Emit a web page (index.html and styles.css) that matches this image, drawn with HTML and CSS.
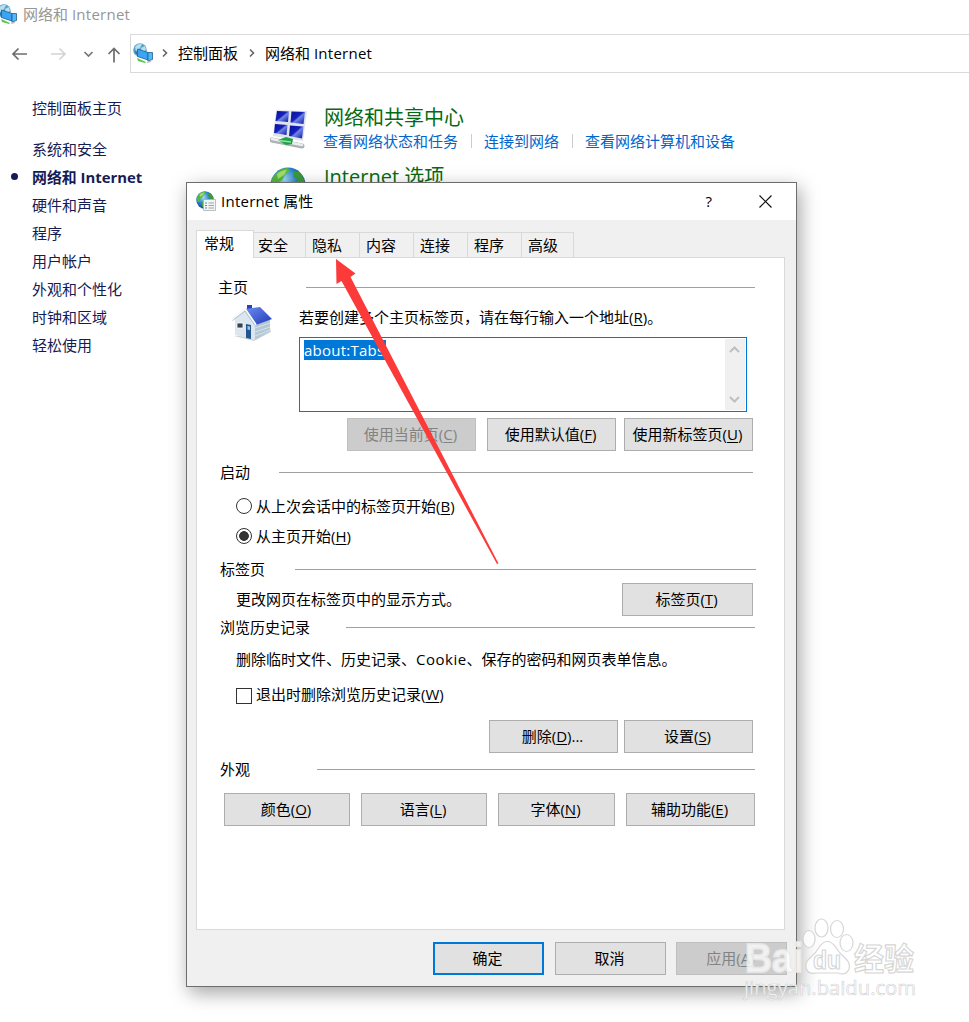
FILE: index.html
```html
<!DOCTYPE html>
<html lang="zh-CN">

<head>
  <meta charset="UTF-8">
  <meta name="viewport" content="width=device-width, initial-scale=1.0">
  <title>网络和 Internet</title>
  <link rel="stylesheet" href="styles.css">
</head>

<body>
  <!-- shared icons -->
  <svg class="defs" width="0" height="0">
    <defs>
      <radialGradient id="sea" cx="0.4" cy="0.35" r="0.7">
        <stop offset="0" stop-color="#9fdcf5"/>
        <stop offset="0.5" stop-color="#2b83c9"/>
        <stop offset="1" stop-color="#123a80"/>
      </radialGradient>
      <linearGradient id="screen" x1="0" y1="0" x2="1" y2="1">
        <stop offset="0" stop-color="#0a10a0"/>
        <stop offset="0.45" stop-color="#1420b8"/>
        <stop offset="0.55" stop-color="#6f86e6"/>
        <stop offset="1" stop-color="#0c12a0"/>
      </linearGradient>
      <linearGradient id="roof" x1="0" y1="0" x2="1" y2="1">
        <stop offset="0" stop-color="#6f8cf0"/>
        <stop offset="1" stop-color="#1f39b8"/>
      </linearGradient>
      <symbol id="net" viewBox="0 0 20 20">
        <circle cx="7" cy="7" r="6.8" fill="#5aa3c8"/>
        <path d="M2 4Q5 0 9 1L7 5 3 8ZM8 5L12 3 13 7 9 9Z" fill="#b9dfee"/>
        <path d="M1 8Q3 12 6 13L5 9Z" fill="#3279a5"/>
        <path d="M4 15L13 19 12 20 5 18Z" fill="#54c94a"/>
        <path d="M4.500 6L15 9.500V17L4.500 13.500Z" fill="#3aa5f5" stroke="#245f8c" stroke-width="0.8"/>
        <path d="M15 9.500L19.500 9.500V16.500L15 18Z" fill="#52b8fa" stroke="#245f8c" stroke-width="0.8"/>
        <path d="M14 18.5L18 17.5V19L14 20Z" fill="#bcbcbc"/>
      </symbol>
      <symbol id="globe" viewBox="0 0 36 36">
        <circle cx="18" cy="18" r="17.5" fill="url(#sea)"/>
        <path d="M3 10Q9 1 18 1L20 4 15 7 13 12 9 15 7 22 3 22Q0 15 3 10Z" fill="#55b83c"/>
        <path d="M24 5L29 5Q35 11 35 18L31 23 27 18 28 12 23 10Z" fill="#3d9a3a"/>
        <path d="M13 21L22 23 20 31 15 34 11 28Z" fill="#47a838"/>
        <path d="M7 7Q12 3 17 3L14 8 8 12Z" fill="#a5dc6a"/>
      </symbol>
    </defs>
  </svg>

  <header>
    <div class="window-title">
      <svg class="title-icon" width="20" height="20"><use href="#net"/></svg>
      <span>网络和 <span class="en">Internet</span></span>
    </div>
    <nav class="nav-bar">
      <div class="nav-buttons">
        <svg width="130" height="40" fill="none" stroke-width="1.7">
          <path d="M27 20H13M18.5 14.500L13 20L18.5 25.500" stroke="#6d6d6d"/>
          <path d="M51 20H65M59.500 14.500L65 20L59.500 25.500" stroke="#d4d4d4"/>
          <path d="M84.500 18L88.500 22L92.500 18" stroke="#777"/>
          <path d="M114 28.500V14.500M108.500 20L114 14.500L119.500 20" stroke="#6d6d6d"/>
        </svg>
      </div>
      <div class="address">
        <svg class="address-icon" width="20" height="20"><use href="#net"/></svg>
        <svg class="chevron" width="6" height="10"><path d="M1 1.500L4.500 5L1 8.500"/></svg>
        <span>控制面板</span>
        <svg class="chevron" width="6" height="10"><path d="M1 1.500L4.500 5L1 8.500"/></svg>
        <span>网络和 <span class="en">Internet</span></span>
      </div>
    </nav>
  </header>

  <div class="content">
    <aside class="sidebar">
      <div class="home-link">控制面板主页</div>
      <ul>
        <li>系统和安全</li>
        <li class="current">网络和 Internet</li>
        <li>硬件和声音</li>
        <li>程序</li>
        <li>用户帐户</li>
        <li>外观和个性化</li>
        <li>时钟和区域</li>
        <li>轻松使用</li>
      </ul>
    </aside>

    <main>
      <section class="category">
        <svg class="category-icon" width="38" height="40" viewBox="0 0 38 40">
          <path d="M6 1L37 2 33 32 3 27Z" fill="#dfe3ea"/>
          <path d="M7 2L19 2.500 18 13 5.500 12Z" fill="url(#screen)"/>
          <path d="M21.500 2.500L35 3 33.500 15 20.500 13.500Z" fill="url(#screen)"/>
          <path d="M5 15L17.500 16 16.500 26 4 24Z" fill="url(#screen)"/>
          <path d="M20 16.500L33.500 17.500 32 29.500 19 27Z" fill="url(#screen)"/>
          <path d="M2 31L32 37" stroke="#aab2b4" stroke-width="5" stroke-linecap="round"/>
          <path d="M2 30L32 36" stroke="#eceeee" stroke-width="2.500" stroke-linecap="round"/>
          <path d="M8 31L16 28 23 30 22 35 16 36Z" fill="#21a04b"/>
          <path d="M9 31.500L21 33" stroke="#8be89b" stroke-width="1.500"/>
        </svg>
        <div>
          <h2>网络和共享中心</h2>
          <div class="links">
            <a>查看网络状态和任务</a>
            <a>连接到网络</a>
            <a>查看网络计算机和设备</a>
          </div>
        </div>
      </section>
      <section class="category second">
        <svg class="category-icon" width="36" height="36"><use href="#globe"/></svg>
        <div>
          <h2>Internet 选项</h2>
        </div>
      </section>
    </main>
  </div>

  <div class="dialog">
    <div class="dialog-title">
      <svg class="dialog-icon" width="20" height="20" viewBox="0 0 20 20">
        <svg width="18" height="18"><use href="#globe"/></svg>
        <path d="M7.500 8.500H19.500V19.500H7.500Z" fill="#f4f4f4" stroke="#a9b0b4" stroke-width="0.800"/>
        <path d="M9 12H11M9 14.500H11M9 17H11" stroke="#4d8fc0"/>
        <path d="M12.500 12H18M12.500 14.500H18M12.500 17H18" stroke="#9aa4aa"/>
      </svg>
      <span><span class="en">Internet</span> 属性</span>
      <span class="help">?</span>
      <svg class="close" width="13" height="13"><path d="M0.500 0.500L12.500 12.500M12.500 0.500L0.500 12.500"/></svg>
    </div>

    <div class="tabs">
      <div class="tab active">常规</div>
      <div class="tab">安全</div>
      <div class="tab">隐私</div>
      <div class="tab">内容</div>
      <div class="tab">连接</div>
      <div class="tab">程序</div>
      <div class="tab">高级</div>
    </div>

    <div class="panel">
      <div class="group-title home-title"><span>主页</span><i></i></div>
      <div class="homepage">
        <svg class="house" width="40" height="38" viewBox="0 0 40 38">
          <path d="M2 32L22 37 39 28 38 24 20 32Z" fill="#ccd3d6"/>
          <path d="M15 1H20V8H15Z" fill="#2742b4"/>
          <path d="M3 14L14 6 24 20 23 36 3 31Z" fill="#dbe6ee"/>
          <path d="M23 20L38 15V27L23 36Z" fill="#b4c8d4"/>
          <path d="M23 24L38 19M23 28L38 23M23 32L38 26" stroke="#d5e2e9"/>
          <path d="M13 5L28 3 40 15 24 21Z" fill="url(#roof)"/>
          <path d="M0.500 15L13 5 24 21" fill="none" stroke="#f5f9fc" stroke-width="2"/>
          <path d="M0.500 16.500L13 7L23 21.500" fill="none" stroke="#93a9bc" stroke-width="0.700"/>
          <path d="M5 19H11V24H5Z" fill="#39434a" stroke="#fff" stroke-width="0.800"/>
          <path d="M14 20L19 21V35L14 34Z" fill="#23568e"/>
          <path d="M15.500 22L18 22.500V26L15.500 25.500Z" fill="#9cc5e5"/>
        </svg>
        <div class="homepage-form">
          <div class="label">若要创建多个主页标签页，请在每行输入一个地址(<u>R</u>)。</div>
          <div class="url-box">
            <span class="selected en">about:Tabs</span>
            <div class="scrollbar">
              <svg width="11" height="8"><path d="M1 7L5.500 2.500L10 7"/></svg>
              <svg width="11" height="8"><path d="M1 1L5.500 5.500L10 1"/></svg>
            </div>
          </div>
        </div>
      </div>
      <div class="buttons homepage-buttons">
        <div class="btn disabled">使用当前页(<u>C</u>)</div>
        <div class="btn">使用默认值(<u>F</u>)</div>
        <div class="btn">使用新标签页(<u>U</u>)</div>
      </div>

      <div class="group-title startup-title"><span>启动</span><i></i></div>
      <div class="option"><span class="radio"></span><span>从上次会话中的标签页开始(<u>B</u>)</span></div>
      <div class="option"><span class="radio checked"></span><span>从主页开始(<u>H</u>)</span></div>

      <div class="group-title tabs-title"><span>标签页</span><i></i></div>
      <div class="tabs-row">
        <span>更改网页在标签页中的显示方式。</span>
        <div class="btn">标签页(<u>T</u>)</div>
      </div>

      <div class="group-title history-title"><span>浏览历史记录</span><i></i></div>
      <div class="history-text">删除临时文件、历史记录、<span class="en">Cookie</span>、保存的密码和网页表单信息。</div>
      <div class="history-check"><span class="checkbox"></span><span>退出时删除浏览历史记录(<u>W</u>)</span></div>
      <div class="buttons history-buttons">
        <div class="btn">删除(<u>D</u>)...</div>
        <div class="btn">设置(<u>S</u>)</div>
      </div>

      <div class="group-title look-title"><span>外观</span><i></i></div>
      <div class="look-buttons">
        <div class="btn">颜色(<u>O</u>)</div>
        <div class="btn">语言(<u>L</u>)</div>
        <div class="btn">字体(<u>N</u>)</div>
        <div class="btn">辅助功能(<u>E</u>)</div>
      </div>
    </div>

    <div class="dialog-footer">
      <div class="btn default">确定</div>
      <div class="btn">取消</div>
      <div class="btn disabled">应用(<u>A</u>)</div>
    </div>
  </div>

  <!-- red pointer to the privacy tab -->
  <svg class="arrow" width="170" height="310">
    <path d="M5 1L24.500 15.500L19.500 19L167.500 305.500L166 306L10.500 23L5.500 26Z" fill="#fc3a3a"/>
  </svg>

  <svg class="watermark" width="190" height="90">
    <g class="mark">
      <text class="bai" x="5" y="57" font-size="40" textLength="58" lengthAdjust="spacingAndGlyphs">Bai</text>
      <ellipse cx="69" cy="24" rx="6" ry="8.500"/>
      <ellipse cx="81.500" cy="13" rx="6.500" ry="9"/>
      <ellipse cx="97" cy="14" rx="6.500" ry="8.500"/>
      <ellipse cx="106.500" cy="28" rx="6.500" ry="8.500"/>
      <path d="M66 53Q65 47 70 43Q76 38 80 31Q87 22 95 31Q99 38 105 43Q111 48 109 54Q106 61 98 58H77Q68 60 66 53Z"/>
      <text x="73" y="54" font-size="25" textLength="28" lengthAdjust="spacingAndGlyphs">du</text>
      <text x="114" y="55" font-size="31" textLength="60" lengthAdjust="spacingAndGlyphs">经验</text>
      <text class="site" x="4" y="80" font-size="20" textLength="172" lengthAdjust="spacingAndGlyphs">jingyan.baidu.com</text>
    </g>
  </svg>
</body>

</html>
```
FILE: styles.css
```css
*,
*::before,
*::after {
	box-sizing: border-box;
}

body {
	margin: 0;
	height: 100vh;
	overflow: hidden;
	background: #fff;
	color: #000;
	font-family: "Open Sans", "Noto Sans CJK SC", sans-serif;
	font-size: 15px;
	line-height: 20px;
	white-space: nowrap;
}

svg {
	display: block;
	flex: none;
}

.en {
	letter-spacing: 0.25px;
}

.defs {
	position: absolute;
}

/* explorer window */
.window-title {
	display: flex;
	height: 34px;
	padding-top: 4px;
	color: #969696;
}

.title-icon {
	margin-left: -3px;
	margin-right: 6px;
}

.nav-bar {
	display: flex;
}

.nav-buttons {
	width: 130px;
	height: 39px;
}

.address {
	flex: 1;
	display: flex;
	align-items: center;
	height: 39px;
	border: 1px solid #d9d9d9;
	border-right: 0;
	padding: 0 0 2px 2px;
}

.chevron {
	margin: 0 10px 0 11px;
	fill: none;
	stroke: #666;
	stroke-width: 1.6;
}

.address-icon + .chevron {
	margin-left: 9px;
}

.content {
	display: flex;
}

.sidebar {
	width: 270px;
	padding: 25px 0 0 32px;
	color: #151c55;
}

.sidebar ul {
	list-style: none;
	margin: 17px 0 0;
	padding: 0;
}

.sidebar li {
	height: 28px;
	line-height: 28px;
}

.sidebar .current {
	display: flex;
	align-items: center;
	margin-left: -21px;
	padding-bottom: 1px;
	font-weight: bold;
	font-size: 14.9px;
}

.current::before {
	content: "";
	width: 7px;
	height: 7px;
	margin-right: 14px;
	border-radius: 50%;
	background: #151c55;
}

.category {
	display: flex;
	padding-top: 32px;
}

.category-icon {
	width: 38px;
	margin: 4px 15px 0 0;
}

.category h2 {
	margin: 0 0 0 1px;
	color: #036b12;
	font-size: 20px;
	font-weight: normal;
	line-height: 25px;
}

.links {
	display: flex;
	margin-top: 1px;
	color: #0066cc;
}

.links a + a {
	margin-left: 13px;
	padding-left: 13px;
	background: linear-gradient(#ccc, #ccc) 0 center / 1px 14px no-repeat;
}

.category.second {
	padding-top: 14px;
}

.second .category-icon {
	margin-top: 2px;
	width: 36px;
	margin-right: 17px;
}

.second h2 {
	line-height: 23px;
}

/* dialog */
.dialog {
	position: absolute;
	left: 186px;
	top: 182px;
	width: 611px;
	height: 805px;
	background: #f0f0f0;
	border: 1px solid #6d6d6d;
	box-shadow: 3px 6px 18px rgba(0, 0, 0, 0.36);
}

.dialog-title {
	display: flex;
	align-items: center;
	height: 37px;
	padding: 0 24px 1px 9px;
	background: #fff;
}

.dialog-icon {
	margin-right: 5px;
}

.help {
	margin-left: auto;
	margin-right: 47px;
}

.close {
	fill: none;
	stroke: #111;
	stroke-width: 1.2;
}

.tabs {
	display: flex;
	align-items: flex-end;
	height: 37px;
	padding-left: 9px;
}

.tab {
	width: 54px;
	height: 25px;
	padding-left: 6px;
	border: 1px solid #d9d9d9;
	border-width: 1px 1px 0 0;
	line-height: 24px;
}

.tab.active {
	position: relative;
	width: 58px;
	height: 28px;
	margin-bottom: -1px;
	padding-left: 7px;
	border-width: 1px 1px 0 1px;
	background: #fff;
	line-height: 25px;
}

.tab.active + .tab {
	width: 52px;
	padding-left: 4px;
}

.tab:last-child {
	width: 52px;
}

.panel {
	width: 589px;
	height: 673px;
	margin-left: 9px;
	padding: 19px 0 0 22px;
	border: 1px solid #d9d9d9;
	background: #fff;
}

.group-title {
	display: flex;
	align-items: center;
	width: 536px;
	height: 20px;
}

.group-title span {
	flex: none;
	margin-left: 1px;
}

.group-title i {
	height: 1px;
	margin-left: auto;
	background: #a0a0a0;
}

.home-title span {
	margin-left: -1px;
}

.home-title i {
	width: 449px;
}

.homepage {
	display: flex;
	margin-top: 7px;
}

.house {
	margin-left: 13px;
}

.homepage-form {
	margin: 3px 0 0 27px;
}

.url-box {
	display: flex;
	justify-content: space-between;
	width: 448px;
	height: 75px;
	margin-top: 10px;
	padding: 1px 1px 1px 4px;
	border: 1px solid #0078d7;
}

.selected {
	width: 82px;
	height: 20px;
	margin-top: 1px;
	background: #0078d7;
	color: #fff;
}

.scrollbar {
	display: flex;
	flex-direction: column;
	align-items: center;
	justify-content: space-between;
	width: 20px;
	padding: 6px 2px 6px 0;
	background: #f0f0f0;
	fill: none;
	stroke: #bfbfbf;
	stroke-width: 2;
}

.btn {
	width: 129px;
	height: 33px;
	padding-right: 2px;
	border: 1px solid #adadad;
	background: #e1e1e1;
	line-height: 30px;
	text-align: center;
}

.btn.disabled {
	border-color: #bfbfbf;
	background: #ccc;
	color: #838383;
}

u {
	text-underline-offset: 2px;
}

.buttons {
	display: flex;
	justify-content: flex-end;
	width: 534px;
}

.homepage-buttons {
	gap: 8px;
	margin-top: 6px;
}

.homepage-buttons .disabled {
	margin-right: 3px;
}

.startup-title {
	width: 534px;
	margin-top: 11px;
}

.startup-title i {
	width: 474px;
}

.option {
	display: flex;
	align-items: center;
	height: 20px;
	margin: 14px 0 0 17px;
}

.option + .option {
	margin-top: 10px;
}

.radio {
	width: 16px;
	height: 16px;
	margin-right: 4px;
	border: 1px solid #333;
	border-radius: 50%;
}

.radio.checked {
	background: radial-gradient(circle, #333 4.5px, #fff 5.2px);
}

.tabs-title {
	margin-top: 13px;
	width: 537px;
}

.tabs-title i {
	width: 461px;
}

.tabs-row {
	display: flex;
	align-items: center;
	justify-content: space-between;
	width: 534px;
	margin-top: 4px;
	padding-left: 17px;
}

.tabs-row span {
	padding-bottom: 2px;
}

.tabs-row .btn {
	width: 131px;
}

.history-title {
	margin-top: 1px;
}

.history-title i {
	width: 409px;
}

.history-text {
	margin: 12px 0 0 17px;
}

.history-text .en {
	letter-spacing: 0.5px;
}

.history-check {
	display: flex;
	margin: 15px 0 0 17px;
}

.checkbox {
	width: 16px;
	height: 16px;
	margin: 4px 4px 0 0;
	border: 1px solid #333;
}

.history-buttons {
	gap: 6px;
	margin-top: 16px;
}

.look-title {
	margin-top: 6px;
}

.look-title i {
	width: 438px;
}

.look-buttons {
	display: grid;
	grid-template-columns: 126px 126px 117px 129px;
	gap: 11px;
	margin: 14px 0 0 5px;
}

.look-buttons .btn {
	width: auto;
}

.dialog-footer {
	display: flex;
	justify-content: flex-end;
	gap: 11px;
	margin-top: 12px;
	padding-right: 9px;
}

.dialog-footer .btn {
	width: 111px;
}

.dialog-footer .disabled {
	margin-left: -1px;
}

.btn.default {
	border: 2px solid #0078d7;
	line-height: 28px;
}

/* overlays */
.arrow {
	position: absolute;
	left: 331px;
	top: 258px;
}

.watermark {
	position: absolute;
	left: 740px;
	top: 915px;
}

.mark {
	fill: rgba(255, 255, 255, 0.8);
	stroke: rgba(200, 200, 200, 0.75);
	stroke-width: 1.2;
	font-family: "Liberation Sans", "Noto Sans CJK SC", sans-serif;
	font-weight: bold;
}

.mark .bai {
	fill: rgba(255, 255, 255, 0.75);
	stroke: rgba(235, 235, 235, 0.8);
	stroke-width: 2;
}

.mark .site {
	fill: rgba(255, 255, 255, 0.9);
	font-family: "Open Sans", sans-serif;
	font-weight: normal;
	stroke-width: 0.7;
}
```
